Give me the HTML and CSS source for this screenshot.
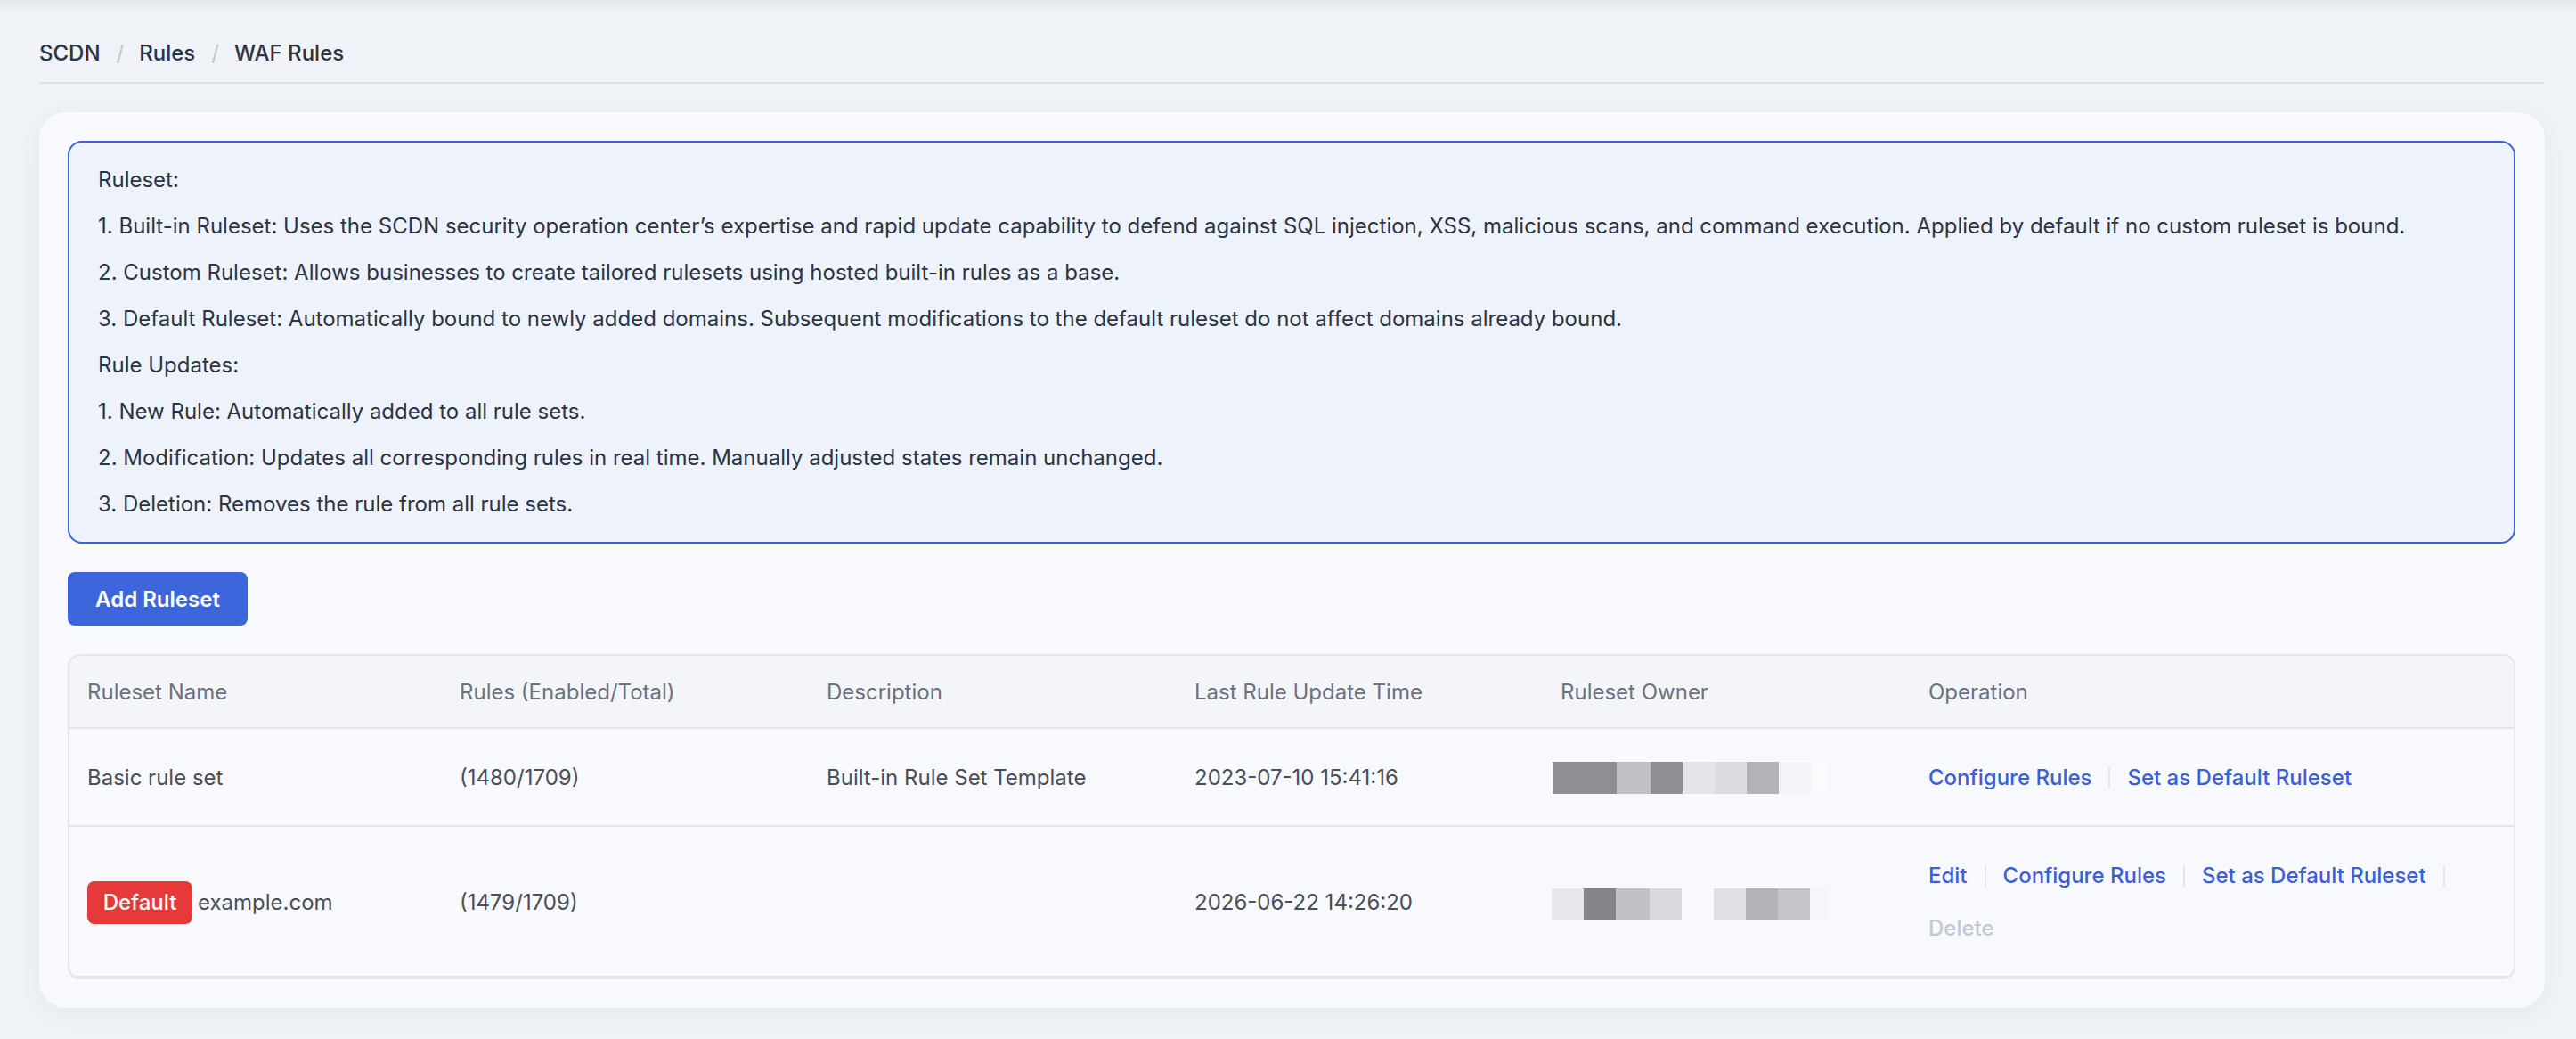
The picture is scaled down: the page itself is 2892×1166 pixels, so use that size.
FILE: index.html
```html
<!DOCTYPE html>
<html lang="en">
<head>
<meta charset="utf-8">
<title>WAF Rules</title>
<link rel="stylesheet" href="styles.css">
</head>
<body>
<div class="page">
  <nav class="breadcrumb">
    <span class="crumb">SCDN</span>
    <span class="slash">/</span>
    <span class="crumb">Rules</span>
    <span class="slash">/</span>
    <span class="crumb">WAF Rules</span>
  </nav>

  <main class="card">
    <section class="info">
      <p>Ruleset:</p>
      <p>1. Built-in Ruleset: Uses the SCDN security operation center’s expertise and rapid update capability to defend against SQL injection, XSS, malicious scans, and command execution. Applied by default if no custom ruleset is bound.</p>
      <p>2. Custom Ruleset: Allows businesses to create tailored rulesets using hosted built-in rules as a base.</p>
      <p>3. Default Ruleset: Automatically bound to newly added domains. Subsequent modifications to the default ruleset do not affect domains already bound.</p>
      <p>Rule Updates:</p>
      <p>1. New Rule: Automatically added to all rule sets.</p>
      <p>2. Modification: Updates all corresponding rules in real time. Manually adjusted states remain unchanged.</p>
      <p>3. Deletion: Removes the rule from all rule sets.</p>
    </section>

    <div class="toolbar">
      <button class="btn-primary" type="button">Add Ruleset</button>
    </div>

    <div class="table">
      <div class="row head">
        <div class="cell">Ruleset Name</div>
        <div class="cell">Rules (Enabled/Total)</div>
        <div class="cell">Description</div>
        <div class="cell">Last Rule Update Time</div>
        <div class="cell">Ruleset Owner</div>
        <div class="cell">Operation</div>
      </div>

      <div class="row">
        <div class="cell">Basic rule set</div>
        <div class="cell">(1480/1709)</div>
        <div class="cell">Built-in Rule Set Template</div>
        <div class="cell">2023-07-10 15:41:16</div>
        <div class="cell">
          <div class="mosaic">
            <i class="m1"></i><i class="m1"></i><i class="m3 w38"></i><i class="m1"></i><i class="m5"></i><i class="m6"></i><i class="m7"></i><i class="m8"></i><i class="m9 w22"></i>
          </div>
        </div>
        <div class="cell ops">
          <a class="link">Configure Rules</a><span class="sep"></span>
          <a class="link">Set as Default Ruleset</a>
        </div>
      </div>

      <div class="row">
        <div class="cell name"><span class="badge">Default</span><span>example.com</span></div>
        <div class="cell">(1479/1709)</div>
        <div class="cell"></div>
        <div class="cell">2026-06-22 14:26:20</div>
        <div class="cell">
          <div class="mosaic small">
            <i class="n1"></i><i class="n2"></i><i class="m3 w38"></i><i class="n4"></i><i class="gap"></i><i class="n6"></i><i class="m7"></i><i class="n8"></i><i class="n9 w22"></i>
          </div>
        </div>
        <div class="cell ops">
          <a class="link">Edit</a><span class="sep"></span>
          <a class="link">Configure Rules</a><span class="sep"></span>
          <a class="link">Set as Default Ruleset</a><span class="sep"></span>
          <a class="link disabled">Delete</a>
        </div>
      </div>
    </div>
  </main>
</div>
</body>
</html>
```

FILE: styles.css
```css
* { box-sizing: border-box; }

html, body {
  margin: 0;
  padding: 0;
}

body {
  font-family: Inter, "Noto Sans", "Liberation Sans", sans-serif;
  font-size: 24px;
  color: #2c3345;
  background: linear-gradient(to bottom, #e4e7eb 0, #eff2f6 14px, #eff2f6 100%);
  min-height: 1166px;
}

.page {
  padding: 0 35px 0 44px;
}

.breadcrumb {
  display: flex;
  align-items: center;
  padding-top: 42px;
  padding-bottom: 14px;
  line-height: 36px;
  border-bottom: 2px solid #dcdfe5;
  font-weight: 500;
  color: #2c3345;
}

.slash {
  color: #c2c6ce;
  margin: 0 17px 0 18px;
  font-weight: 400;
}

.card {
  margin-top: 32px;
  background: #f8f9fd;
  border-radius: 30px;
  padding: 32px 33px 32px 32px;
  box-shadow: 0 6px 30px rgba(30, 40, 60, 0.05);
}

.info {
  background: #eef3fb;
  border: 2px solid #3a63d8;
  border-radius: 16px;
  padding: 24px 32px;
}

.info p {
  margin: 0 0 16px;
  line-height: 36px;
}

.info p:last-child { margin-bottom: 0; }

.toolbar {
  margin-top: 32px;
}

.btn-primary {
  font-family: inherit;
  font-size: 24px;
  font-weight: 600;
  color: #ffffff;
  background: #3d66dd;
  border: none;
  border-radius: 8px;
  height: 60px;
  width: 202px;
  padding: 0;
}

.table {
  margin-top: 32px;
  border: 2px solid #e3e5ec;
  border-radius: 14px;
  overflow: hidden;
  background: #f8f9fd;
}

.row {
  display: grid;
  grid-template-columns: 418px 412px 413px 411px 413px 1fr;
  border-bottom: 2px solid #e3e5ec;
  color: #4a4e58;
}

.row.head {
  background: #f4f5f9;
  color: #6b7181;
}

.cell {
  padding: 37px 20px 35px;
  line-height: 36px;
  display: flex;
  align-items: center;
  min-height: 36px;
}

.head .cell {
  padding-top: 23px;
  padding-bottom: 21px;
}

.name { gap: 6px; }

.badge {
  display: inline-flex;
  align-items: center;
  justify-content: center;
  height: 48px;
  width: 118px;
  border-radius: 8px;
  background: #e5393a;
  color: #ffffff;
  font-weight: 500;
}

.mosaic {
  display: flex;
  margin-left: -9px;
  height: 36px;
}

.mosaic.small { height: 35px; margin-left: -10px; margin-top: 4px; }

.mosaic i {
  display: block;
  width: 36px;
  height: 100%;
}

.mosaic i.w38 { width: 38px; }
.mosaic i.w22 { width: 22px; }

.m1 { background: #8e8f93; }
.m3 { background: #c0c1c5; }
.m5 { background: #e4e4e9; }
.m6 { background: #dcdde1; }
.m7 { background: #b3b4b8; }
.m8 { background: #f3f4f8; }
.m9 { background: #fbfbfe; }
.n1 { background: #e7e8ec; }
.n2 { background: #838488; }
.n4 { background: #d9dadf; }
.n6 { background: #e0dfe4; }
.n8 { background: #c4c5c9; }
.n9 { background: #f5f6fa; }
.gap { background: transparent; }

.ops {
  flex-wrap: wrap;
  row-gap: 23px;
  align-content: center;
}

.link {
  color: #3a5fd8;
  font-weight: 500;
  cursor: pointer;
}

.link.disabled {
  color: #c1c7d3;
  cursor: default;
}

.sep {
  display: inline-block;
  width: 2px;
  height: 24px;
  background: #e2e5eb;
  margin: 0 19px;
}
```
